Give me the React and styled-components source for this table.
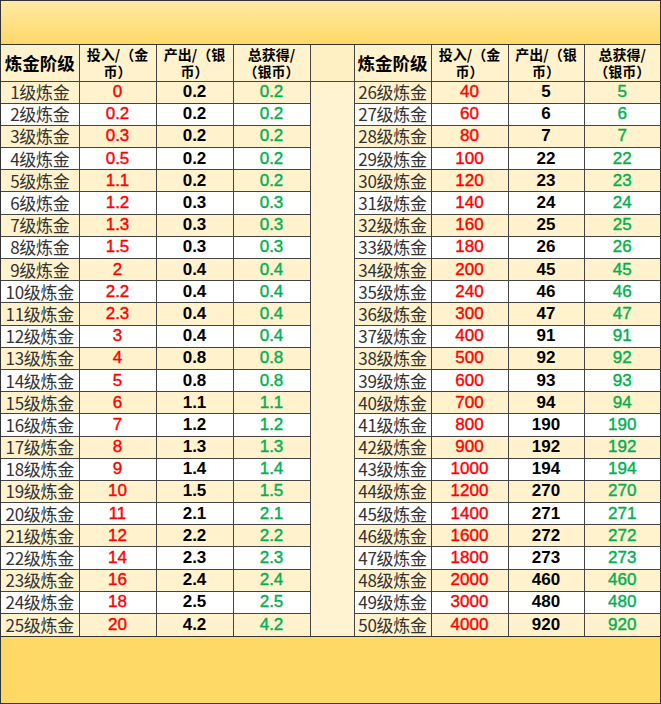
import styled, { createGlobalStyle } from "styled-components";

const GlobalStyle = createGlobalStyle`
    html, body {
        margin: 0;
        padding: 0;
        background: #ffffff;
    }
`;

const left = {
    start: 1,
    cost: ["0", "0.2", "0.3", "0.5", "1.1", "1.2", "1.3", "1.5", "2", "2.2", "2.3", "3", "4", "5", "6", "7", "8", "9", "10", "11", "12", "14", "16", "18", "20"],
    out: ["0.2", "0.2", "0.2", "0.2", "0.2", "0.3", "0.3", "0.3", "0.4", "0.4", "0.4", "0.4", "0.8", "0.8", "1.1", "1.2", "1.3", "1.4", "1.5", "2.1", "2.2", "2.3", "2.4", "2.5", "4.2"],
};

const right = {
    start: 26,
    cost: ["40", "60", "80", "100", "120", "140", "160", "180", "200", "240", "300", "400", "500", "600", "700", "800", "900", "1000", "1200", "1400", "1600", "1800", "2000", "3000", "4000"],
    out: ["5", "6", "7", "22", "23", "24", "25", "26", "45", "46", "47", "91", "92", "93", "94", "190", "192", "194", "270", "271", "272", "273", "460", "480", "920"],
};

const colWidths = [78, 77, 77, 77, 44, 77, 77, 76, 76];

const App = () => {
    const rows = left.cost.map((_, i) => i);

    const renderHalf = (side, i, odd) => (
        <>
            <NameCell $odd={odd}>{side.start + i}级炼金</NameCell>
            <ValueCell $odd={odd} $tone="red">{side.cost[i]}</ValueCell>
            <ValueCell $odd={odd} $tone="black">{side.out[i]}</ValueCell>
            <ValueCell $odd={odd} $tone="green">{side.out[i]}</ValueCell>
        </>
    );

    const renderHead = () => (
        <>
            <HeadCell $big>炼金阶级</HeadCell>
            <HeadCell>投入/（金<br />币）</HeadCell>
            <HeadCell>产出/（银<br />币）</HeadCell>
            <HeadCell>总获得/<br />（银币）</HeadCell>
        </>
    );

    return (
        <>
            <GlobalStyle />
            <Frame>
                <TopBand />
                <Sheet>
                    <colgroup>
                        {colWidths.map((w, i) => <col key={i} style={{ width: w }} />)}
                    </colgroup>
                    <thead>
                        <HeadRow>
                            {renderHead()}
                            <GapHead />
                            {renderHead()}
                        </HeadRow>
                    </thead>
                    <tbody>
                        {rows.map(i => {
                            const odd = i % 2 === 0;
                            return (
                                <Row key={i}>
                                    {renderHalf(left, i, odd)}
                                    {i === 0 && <GapCell rowSpan={rows.length} />}
                                    {renderHalf(right, i, odd)}
                                </Row>
                            );
                        })}
                    </tbody>
                </Sheet>
                <BottomBand />
            </Frame>
        </>
    );
};

const Frame = styled.div`
    width: 661px;
    height: 704px;
    box-sizing: border-box;
    border: 1px solid #333;
    display: flex;
    flex-direction: column;
    background: #fff;
`;

const TopBand = styled.div`
    height: 43px;
    flex: none;
    border-bottom: 1px solid #333;
    background: linear-gradient(#ffe9a6, #ffd966);
`;

const BottomBand = styled.div`
    flex: 1;
    border-top: 1px solid #333;
    background: #ffd966;
`;

const Sheet = styled.table`
    width: 659px;
    table-layout: fixed;
    border-collapse: collapse;
    border-style: hidden;
    flex: none;

    td, th {
        border: 1px solid #444;
        padding: 0;
        white-space: nowrap;
    }
`;

const HeadRow = styled.tr`
    height: 36px;
`;

const Row = styled.tr`
    height: 22.2px;
`;

const HeadCell = styled.th`
    background: #fff2cc;
    color: #000;
    font-family: "Noto Sans CJK SC", sans-serif;
    font-weight: 700;
    font-size: ${p => (p.$big ? "17.5px" : "14px")};
    line-height: 17px;
    text-align: center;
    vertical-align: middle;
`;

const GapHead = styled.th`
    background: #fff0c4;
`;

const GapCell = styled.td`
    background: #fff3d2;
`;

const NameCell = styled.td`
    background: ${p => (p.$odd ? "#fff2cc" : "#ffffff")};
    color: #333;
    font-family: "Noto Sans CJK SC", sans-serif;
    font-size: 17px;
    line-height: 20px;
    text-align: center;
    letter-spacing: -0.3px;
`;

const tones = {
    red: "#ff0000",
    black: "#000000",
    green: "#00b050",
};

const ValueCell = styled.td`
    background: ${p => (p.$odd ? "#fff2cc" : "#ffffff")};
    color: ${p => tones[p.$tone]};
    font-family: "Liberation Sans", Arial, sans-serif;
    font-weight: ${p => (p.$tone === "black" ? 700 : 400)};
    -webkit-text-stroke: ${p => (p.$tone === "black" ? "0" : "0.4px currentColor")};
    font-size: 17px;
    line-height: 20px;
    text-align: center;
`;

export default App;
